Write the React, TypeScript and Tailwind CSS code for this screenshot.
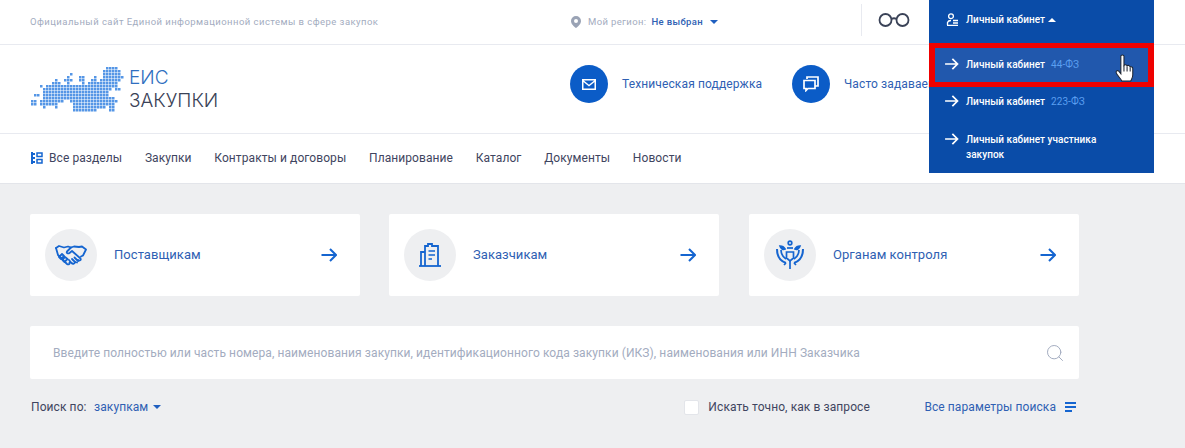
import { Search } from "lucide-react";

const NAV = ["Закупки", "Контракты и договоры", "Планирование", "Каталог", "Документы", "Новости"];

// dot spans of the map logo, one list of [fromCol, toCol] per row
const MAP_ROWS: [number, number][][] = [
  [[26, 29]],
  [[25, 30]],
  [[14, 14], [25, 30]],
  [[13, 13], [17, 18], [22, 22], [25, 31]],
  [[9, 9], [12, 14], [17, 18], [21, 22], [24, 30]],
  [[8, 10], [13, 13], [18, 18], [20, 29]],
  [[4, 4], [6, 29]],
  [[5, 27], [29, 30]],
  [[5, 26]],
  [[2, 3], [5, 26]],
  [[5, 28]],
  [[1, 2], [4, 11], [14, 29]],
  [[1, 2], [4, 9], [15, 28]],
  [[5, 5], [9, 9], [15, 25], [27, 28]],
  [[15, 22], [27, 28]],
];

function Arrow({ className }: { className?: string }) {
  return (
    <svg viewBox="0 0 16 14" fill="none" stroke="currentColor" strokeWidth="2" className={className}>
      <path d="M0.500 7H15M9 1l6 6-6 6" />
    </svg>
  );
}

function MapLogo() {
  return (
    <svg width="96" height="50" viewBox="0 0 96 50" className="-ml-[2px] shrink-0">
      {MAP_ROWS.map((spans, row) =>
        spans.map(([from, to]) =>
          Array.from({ length: to - from + 1 }, (_, i) => (
            <rect key={`${row}-${from + i}`} x={(from + i) * 3} y={3 + row * 3} width="2.500" height="2.500" fill="#5596e6" />
          )),
        ),
      )}
    </svg>
  );
}

function Handshake() {
  return (
    <svg viewBox="0 0 32 22" width="32" height="22" fill="none" stroke="#1565d0" strokeWidth="1.800" strokeLinejoin="round" strokeLinecap="round">
      <path d="M1 4l3-2 5 1.500 4-1 3 1 3-1 5 .5 3-.5 4 3-3 6-2 1" />
      <path d="M1 4l2 7 1.500 1.500" />
      <path d="M16 3.500l-4 4c-1 1.500 1 2.500 2.500 1.500l2.500-2 8.500 7.500c1 1.500-1 3-2.500 1.500" />
      <path d="M4 12l8 8c1.500 1 3 0 2.500-1.500M7 10l-3 3 2 2 3-3zM10 13l-2.500 3 2 2 3-3zM14 16l2.500 3c1.500 1.500 3.500.5 3.500-1l2 .5" />
      <path d="M20 18l-3-3M23 17l-3.500-3.500" />
    </svg>
  );
}

function Building() {
  return (
    <svg viewBox="0 0 22 24" width="22" height="24" fill="none" stroke="#1565d0" strokeWidth="1.800">
      <path d="M0 23H22" />
      <path d="M2 23V9H6M6 23V3H9V1H13V3H19V23" />
      <path d="M9.500 8H16M9.500 12H16M9.500 16H13" strokeWidth="1.600" />
    </svg>
  );
}

function Emblem() {
  return (
    <svg viewBox="0 0 28 30" width="28" height="30" fill="none" stroke="#1565d0" strokeWidth="1.700">
      <circle cx="14" cy="3" r="1.800" />
      <path d="M4 6c2 0 4 1 5 3-2 1-4 0-5-3zM24 6c-2 0-4 1-5 3 2 1 4 0 5-3z" fill="#1565d0" />
      <path d="M11 8h6" />
      <path d="M1 9c0 7 3 12 9 14M27 9c0 7-3 12-9 14" strokeWidth="2" />
      <path d="M5 10c0 4 2 7 5 9M23 10c0 4-2 7-5 9" />
      <path d="M10.500 12h7v6l-3.500 3-3.500-3z" />
      <path d="M14 21v8M8 25l2-2M20 25l-2-2" />
    </svg>
  );
}

function RoleCard({ title, icon, className }: { title: string; icon: React.ReactNode; className?: string }) {
  return (
    <a className={`flex h-[82px] w-[330px] items-center rounded-[2px] bg-white pl-[15px] pr-[23px] ${className ?? ""}`}>
      <span className="flex h-[52px] w-[52px] items-center justify-center rounded-full bg-[#eeeff1]">{icon}</span>
      <span className="ml-[17px] flex-1 text-[13px] tracking-[0.05px] text-[#2f5fb3]">{title}</span>
      <Arrow className="h-[14px] w-[16px] text-[#1565d0]" />
    </a>
  );
}

function HandCursor() {
  return (
    <svg viewBox="0 0 20 28" width="22" height="29" className="absolute left-[185px] top-[54px]">
      <path
        fill="#fff"
        stroke="#1d2430"
        strokeWidth="1"
        d="M6 2c0-1.500 3-1.500 3 0v9c1-1 2.500-1 3 .5 1-1 2.500-.5 3 1 1-.5 2.500 0 2.500 1.500v6c0 3-1 4-2 6H7c-1-2-5-6-5.500-8-.5-1.500 1-2.500 2.500-1.500L6 19z"
      />
      <path stroke="#1d2430" d="M9 11v6M12 12v5M15 13v4" />
    </svg>
  );
}

function CabinetMenu() {
  return (
    <div className="absolute left-[929px] top-0 z-10 h-[173px] w-[225px] bg-[#0a4ca8] text-[10px] font-medium tracking-[0.05px] text-white">
      <div className="flex h-[43px] items-center pb-[4px] pl-[17px]">
        <svg viewBox="0 0 13 13" width="13" height="13" fill="none" stroke="#fff" strokeWidth="1.300">
          <circle cx="5" cy="3.200" r="2.400" />
          <path d="M1 12.300H12M1.500 12V9.500C2 8 3.500 7.500 5 7.500M7 7.500h5M7 10h5" />
        </svg>
        <span className="ml-[7px]">Личный кабинет</span>
        <span className="ml-[3px] h-0 w-0 border-x-[4px] border-b-[4px] border-x-transparent border-b-white" />
      </div>
      <div className="flex h-[44px] items-center border-x-[6px] border-y-[5px] border-[#ee0000] bg-[#2158ad] pb-[2px] pl-[9px]">
        <Arrow className="h-[12px] w-[15px] shrink-0" />
        <span className="ml-[7px]">Личный кабинет</span>
        <span className="ml-[6px] font-normal text-[#5b9ff0]">44-ФЗ</span>
      </div>
      <div className="flex h-[30px] items-center pb-[2px] pl-[15px]">
        <Arrow className="h-[12px] w-[15px] shrink-0" />
        <span className="ml-[7px]">Личный кабинет</span>
        <span className="ml-[6px] font-normal text-[#5b9ff0]">223-ФЗ</span>
      </div>
      <div className="mt-[15px] flex items-start pl-[15px]">
        <Arrow className="mt-[1px] h-[12px] w-[15px] shrink-0" />
        <span className="ml-[7px] w-[170px] leading-[15px]">Личный кабинет участника закупок</span>
      </div>
      <HandCursor />
    </div>
  );
}

export default function App() {
  return (
    <div className="h-[448px] w-[1185px] overflow-hidden bg-[#eeeff1] font-['Roboto',sans-serif]">
      <header className="relative bg-white">
        <div className="flex h-[45px] items-center border-b border-[#e8eaf0] pl-[30px]">
          <span className="w-[541px] text-[9.500px] tracking-[0.45px] text-[#a3acc0]">
            Официальный сайт Единой информационной системы в сфере закупок
          </span>
          <svg viewBox="0 0 10 12" width="10" height="12" className="shrink-0">
            <path fillRule="evenodd" fill="#9aa3b5" d="M5 0a5 5 0 0 1 5 5c0 3-3 5.500-5 7-2-1.500-5-4-5-7a5 5 0 0 1 5-5zm0 3a2 2 0 1 0 0 4 2 2 0 0 0 0-4z" />
          </svg>
          <span className="ml-[7px] text-[9.500px] tracking-[0.35px] text-[#a3acc0]">Мой регион:</span>
          <span className="ml-[5px] text-[9.500px] font-medium tracking-[0.35px] text-[#2f5fb3]">Не выбран</span>
          <span className="ml-[7px] h-0 w-0 border-x-[4px] border-t-[4px] border-x-transparent border-t-[#1f5fc0]" />
          <span className="mb-[4px] ml-[143px] h-[32px] w-px bg-[#e8eaf0]" />
          <svg viewBox="0 0 32 14" width="32" height="14" fill="none" stroke="#3a4257" strokeWidth="1.800" className="mb-[4px] ml-[16px]">
            <circle cx="7.500" cy="7" r="6" />
            <circle cx="24.500" cy="7" r="6" />
            <path d="M13.500 6q2.500-1.500 5 0" />
          </svg>
        </div>
        <div className="flex h-[89px] items-center border-b border-[#e8eaf0] pl-[30px]">
          <MapLogo />
          <div className="ml-[5px] w-[441px] font-['Inter',sans-serif] text-[19px] font-light leading-[23px]">
            <div className="text-[#2f6fc0]">ЕИС</div>
            <div className="text-[#3a4257]">ЗАКУПКИ</div>
          </div>
          <span className="mb-[10px] flex h-[38px] w-[38px] items-center justify-center rounded-full bg-[#0b5cc7]">
            <svg viewBox="0 0 14 11" width="14" height="11">
              <path fillRule="evenodd" fill="#fff" d="M0 0h14v11H0zM1.800 1.500 7 5.800l5.200-4.300zM1.500 3v6.500h11V3L7 7.500z" />
            </svg>
          </span>
          <span className="mb-[10px] ml-[14px] w-[170px] text-[12px] tracking-[0.12px] text-[#2f5fb3]">Техническая поддержка</span>
          <span className="mb-[10px] flex h-[38px] w-[38px] items-center justify-center rounded-full bg-[#0b5cc7]">
            <svg viewBox="0 0 16 16" width="16" height="16" fill="none" stroke="#fff" strokeWidth="1.700">
              <path d="M4 3V1h11v9h-3" />
              <path d="M1 4.500h11v8H5l-2 2v-2H1z" />
            </svg>
          </span>
          <span className="mb-[10px] ml-[14px] whitespace-nowrap text-[12px] tracking-[0.12px] text-[#2f5fb3]">Часто задаваемые вопросы</span>
        </div>
        <nav className="flex h-[50px] items-center gap-[22.700px] border-b border-[#e3e5ea] pb-[1px] pl-[31px] text-[12px] tracking-[0.08px] text-[#3f4560]">
          <span className="flex items-center">
            <svg viewBox="0 0 12 12" width="12" height="12" fill="none" stroke="#1565d0" strokeWidth="2">
              <path d="M1 0v12M1 2h3M1 6h3M1 10h3" />
              <rect x="6" y="1" width="5" height="3.500" strokeWidth="1.500" />
              <rect x="6" y="7.500" width="5" height="3.500" strokeWidth="1.500" />
            </svg>
            <span className="ml-[6px]">Все разделы</span>
          </span>
          {NAV.map((item) => (
            <span key={item}>{item}</span>
          ))}
        </nav>
        <CabinetMenu />
      </header>

      <main className="px-[30px] pt-[30px]">
        <div className="flex w-[1049px]">
          <RoleCard title="Поставщикам" icon={<Handshake />} />
          <RoleCard title="Заказчикам" icon={<Building />} className="ml-[29px]" />
          <RoleCard title="Органам контроля" icon={<Emblem />} className="ml-[30px]" />
        </div>
        <div className="mt-[30px] flex h-[53px] w-[1049px] items-center justify-between rounded-[2px] bg-white pl-[23px] pr-[14px]">
          <span className="text-[12px] tracking-[0.09px] text-[#a3acc0]">
            Введите полностью или часть номера, наименования закупки, идентификационного кода закупки (ИКЗ), наименования или ИНН Заказчика
          </span>
          <Search className="h-[20px] w-[20px] text-[#a3acc0]" strokeWidth={1.200} />
        </div>
        <div className="mt-[19px] flex w-[1049px] items-center pl-px text-[12px] tracking-[0.09px]">
          <span className="w-[63px] text-[#3f4560]">Поиск по:</span>
          <span className="text-[#2f5fb3]">закупкам</span>
          <span className="ml-[5px] h-0 w-0 border-x-[4px] border-t-[4px] border-x-transparent border-t-[#1f5fc0]" />
          <span className="ml-[523px] h-[15px] w-[15px] rounded-[2px] border border-[#e3e5ea] bg-white" />
          <span className="ml-[9px] text-[#3f4560]">Искать точно, как в запросе</span>
          <span className="ml-auto text-[#2f5fb3]">Все параметры поиска</span>
          <svg viewBox="0 0 12 10" width="12" height="10" className="ml-[9px] mr-[2px]">
            <path d="M0 1h11M0 5h11M0 9h7" stroke="#1565d0" strokeWidth="2" />
          </svg>
        </div>
      </main>
    </div>
  );
}
